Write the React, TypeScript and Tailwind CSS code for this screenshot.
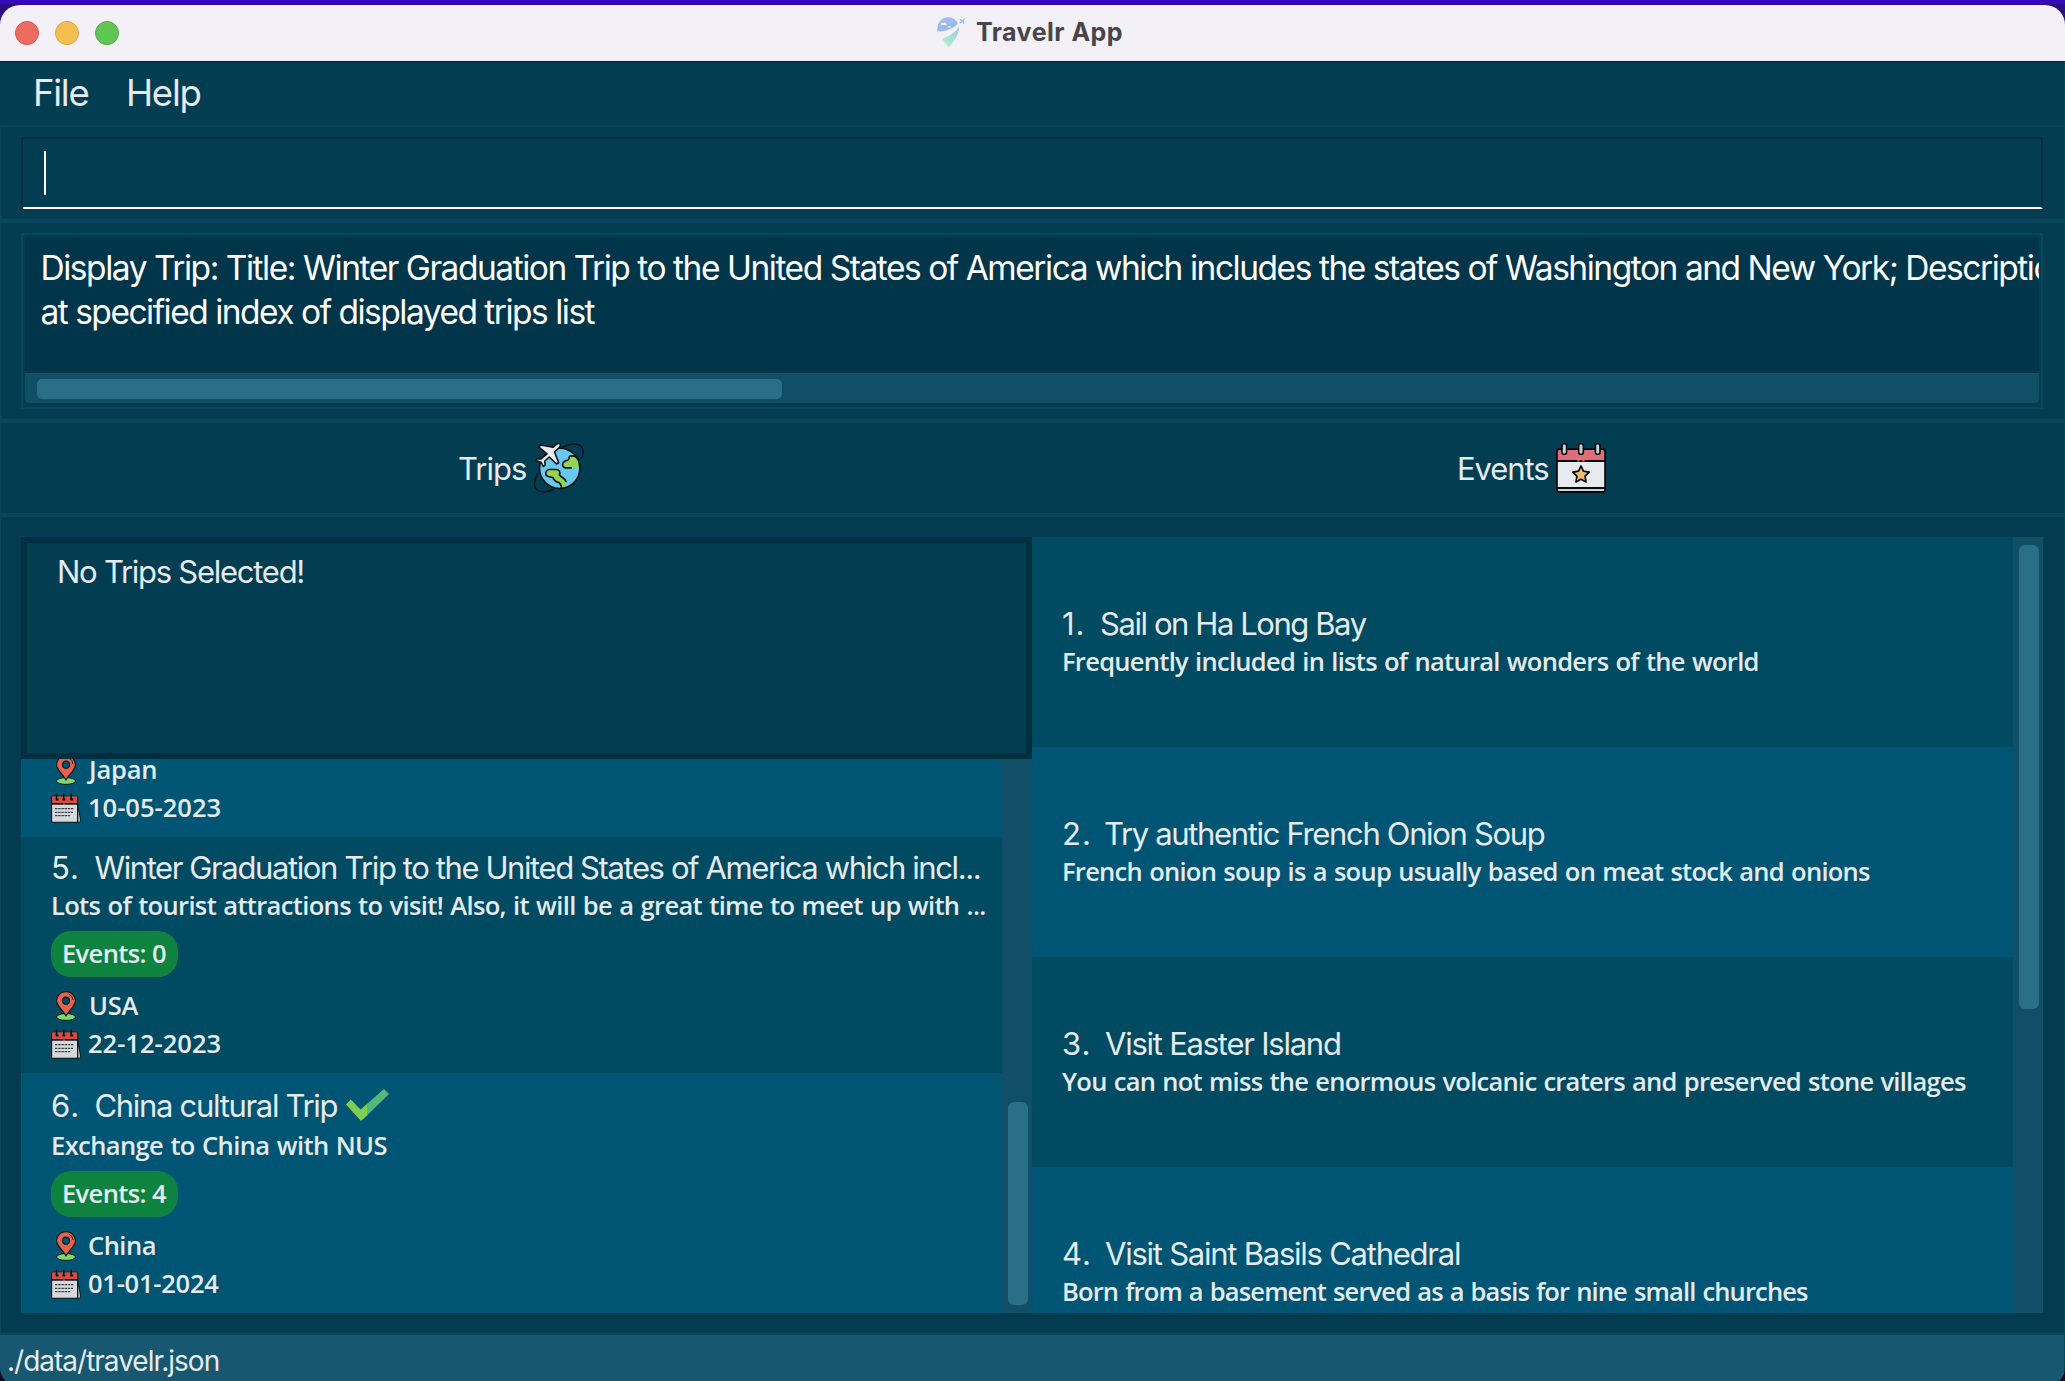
import type { ReactNode } from 'react';

type Trip = {
  index: string;
  title: string;
  titleClass: string;
  description: string;
  descriptionClass: string;
  events: number;
  done?: boolean;
  location: string;
  locationClass: string;
  date: string;
  dateClass: string;
};

type TravelEvent = {
  index: string;
  indexClass: string;
  title: string;
  titleClass: string;
  description: string;
  descriptionClass: string;
};

const trips: Trip[] = [
  {
    index: '5.',
    title: 'Winter Graduation Trip to the United States of America which incl...',
    titleClass: 'tracking-[-1.4px]',
    description: 'Lots of tourist attractions to visit! Also, it will be a great time to meet up with ...',
    descriptionClass: 'tracking-[-0.65px]',
    events: 0,
    location: 'USA',
    locationClass: 'pl-px tracking-[-0.2px]',
    date: '22-12-2023',
    dateClass: '',
  },
  {
    index: '6.',
    title: 'China cultural Trip',
    titleClass: 'tracking-[-1.31px]',
    description: 'Exchange to China with NUS',
    descriptionClass: 'tracking-[-0.6px]',
    events: 4,
    done: true,
    location: 'China',
    locationClass: 'tracking-[-0.5px]',
    date: '01-01-2024',
    dateClass: 'tracking-[-0.25px]',
  },
];

const events: TravelEvent[] = [
  {
    index: '1.',
    indexClass: 'w-[38px]',
    title: 'Sail on Ha Long Bay',
    titleClass: 'tracking-[-1.42px]',
    description: 'Frequently included in lists of natural wonders of the world',
    descriptionClass: 'tracking-[-0.71px]',
  },
  {
    index: '2.',
    indexClass: 'w-[42px]',
    title: 'Try authentic French Onion Soup',
    titleClass: 'tracking-[-1.34px]',
    description: 'French onion soup is a soup usually based on meat stock and onions',
    descriptionClass: 'tracking-[-0.72px]',
  },
  {
    index: '3.',
    indexClass: 'w-[43px]',
    title: 'Visit Easter Island',
    titleClass: 'tracking-[-1.24px]',
    description: 'You can not miss the enormous volcanic craters and preserved stone villages',
    descriptionClass: 'tracking-[-0.735px]',
  },
  {
    index: '4.',
    indexClass: 'w-[43px]',
    title: 'Visit Saint Basils Cathedral',
    titleClass: 'tracking-[-1.24px]',
    description: 'Born from a basement served as a basis for nine small churches',
    descriptionClass: 'tracking-[-0.85px]',
  },
];

function LogoIcon() {
  return (
    <svg className="h-[30px] w-[29px]" viewBox="0 0 29 30">
      <defs>
        <linearGradient id="cap" x1="0" y1="0" x2="1" y2="1">
          <stop offset="0" stopColor="#a3c4f3" />
          <stop offset="1" stopColor="#8fb4ea" />
        </linearGradient>
        <linearGradient id="tail" x1="0.8" y1="0" x2="0.3" y2="1">
          <stop offset="0" stopColor="#a4cde2" />
          <stop offset="1" stopColor="#b0ead0" />
        </linearGradient>
      </defs>
      <path d="M0.4 14.4C-.6 6 4.6.3 11 .3c4.800 0 8.400 2.600 10 6.300C16.500 12 8 14.800.4 14.400z" fill="url(#cap)" />
      <path d="M22.300 9.200C18 16 11 19.500 5 21.800L11.800 30.200C17 24.500 22 18 22.300 9.200z" fill="url(#tail)" />
      <path d="M4 7.200c0-1.200 1.500-1.800 2.300-1 .8-1.400 3-.9 3 .7.800.1.900 1 .1 1H4.600c-.5 0-.6-.4-.6-.7zM10.500 10c.2-1 1.600-1.400 2.200-.6.800-.4 1.700.4 1.200 1.100h-3.200z" fill="#f3f0f7" />
      <path d="M22 6l2.200-1.800-1.800-1.700.9-.5 2.400.9 1.900-1.700c.6-.4 1.100 0 .7.600l-1.600 2 .7 2.500-.6.700-1.500-2-1.600 1.500z" fill="#9dbdf0" />
    </svg>
  );
}

function GlobeIcon() {
  return (
    <svg className="size-[50px]" viewBox="0 0 50 50" strokeLinejoin="round" strokeLinecap="round">
      <circle cx="25.700" cy="25.300" r="20.200" fill="#67c8f0" />
      <path d="M45.500 17.500C43.500 13.500 40 12.600 36 13c-1.500 1.500-.5 3-2 4-2 .5-4 1.500-5 3.500-.5 2 .5 4 2.500 4.300h14z" fill="#94d452" />
      <path d="M13 26.500h9.500c3 .5 4 2.500 3 5.500 1.500 2.500 6 3 6.500 6.500.2 3-1 4.500-1.500 7.200l-3 .3c.5-3.500-1-5-2.500-6.500-3.500-.5-5-2-6-5-2.500-.5-6-.5-6.700-3-.3-2 .7-3 .7-5z" fill="#94d452" />
      <g fill="none" stroke="#061319" strokeWidth="1.700">
        <circle cx="25.700" cy="25.300" r="20.200" />
        <path d="M45 17c-1.500-3.500-5-4.300-9-4-1.500 1.500-.5 3-2 4-2 .5-4.500 1.500-5.300 3.500-.5 2 .5 4 2.500 4.300h6" />
        <path d="M27.500 46c.3-3.500-1-5-2.500-6.500-3.500-.5-5-2-6-5-2.500-.5-6.500-.5-7.200-3-.3-2.500 1.200-4.700 3.200-5h7.500c3 .5 4 2.500 3 5.500 1.500 2.500 6 3 6.500 6.500" />
        <path d="M29.500 4c7-4 15-4.500 18.500.5 2 3.500 1.400 7-.5 11" strokeWidth="1.500" />
        <path d="M3.500 31C.5 36-.5 41.500 1.500 45c3 5 10.500 5 18.500 1" strokeWidth="1.500" />
      </g>
      <path
        d="M13 10.800 5 4l1.500-2 12.500 2.300L23 1c1-.6 3-.6 3.300.2.200 1-.2 2.300-1 3.300L20.500 9l4.200 10.500-2.200 1.500-7.300-7-4.400 4 .3 4-1.700 1.500-2.200-4.200L1.500 17.500 3 15.800l4 .2z"
        fill="#e9edf0"
        stroke="#061319"
        strokeWidth="1.600"
      />
    </svg>
  );
}

function EventCalendarIcon() {
  return (
    <svg className="size-[50px]" viewBox="0 0 50 50" strokeLinejoin="round">
      <rect x="0.900" y="6.200" width="48.200" height="42.800" rx="2.500" fill="#e7ebef" />
      <path d="M.9 18V8.700A2.500 2.500 0 0 1 3.400 6.200h43.200a2.500 2.500 0 0 1 2.500 2.500V18z" fill="#df6d7b" />
      <path d="M.9 45h48.200v1.500A2.500 2.500 0 0 1 46.600 49H3.400a2.500 2.500 0 0 1-2.500-2.500z" fill="#c6d5d9" />
      <path d="M.9 18h48.200M.9 45h48.200" stroke="#05090c" strokeWidth="1.800" />
      <path d="M21.500 17.800h2M26.500 17.800h2" stroke="#ef6f83" strokeWidth="1.500" />
      <rect x="0.900" y="6.200" width="48.200" height="42.800" rx="2.500" fill="none" stroke="#05090c" strokeWidth="1.800" />
      <g fill="#c9d3d9" stroke="#05090c" strokeWidth="1.600">
        <rect x="6" y="0.800" width="4.600" height="10.400" rx="2" />
        <rect x="22.700" y="0.800" width="4.600" height="10.400" rx="2" />
        <rect x="39.400" y="0.800" width="4.600" height="10.400" rx="2" />
      </g>
      <path
        d="M25 23l2.500 5.200 5.700.9-4.100 4.100.9 5.800-5-2.700-5 2.700.9-5.800-4.100-4.100 5.700-.9z"
        fill="#efba72"
        stroke="#05090c"
        strokeWidth="1.700"
      />
    </svg>
  );
}

function PinIcon() {
  return (
    <svg className="size-[30px]" viewBox="0 0 30 30" strokeLinejoin="round">
      <ellipse cx="15" cy="26" rx="9.500" ry="3.400" fill="#7fd772" stroke="#07151b" strokeWidth="1" />
      <path
        fillRule="evenodd"
        d="M15 25c-1.500-3-4-5.500-6.500-8.700C6.500 13.800 5.500 12 5.500 9.600A9.400 9.400 0 0 1 15 .6a9.400 9.400 0 0 1 9.500 9c0 2.400-1 4.200-3 6.700C19 19.500 16.500 22 15 25zM15 6.100a3.600 3.600 0 1 0 0 7.200 3.600 3.600 0 0 0 0-7.200z"
        fill="#e8614a"
        stroke="#07151b"
        strokeWidth="1.100"
      />
      <path d="M18 3.300c2.300.9 3.700 2.900 3.900 5.700" fill="none" stroke="#07151b" strokeWidth="0.900" />
    </svg>
  );
}

function DateIcon() {
  return (
    <svg className="size-[30px]" viewBox="0 0 30 30">
      <path d="M26.500 11.500l3.200 15.500c.1 1.200-.5 2.200-1.700 2.200h-4z" fill="#aab4b9" stroke="#07100f" strokeWidth="0.900" />
      <rect x="0.600" y="3.200" width="26" height="26" rx="1" fill="#d3d9dd" stroke="#07100f" strokeWidth="1.100" />
      <rect x="1" y="3.500" width="25.200" height="7" fill="#dc4a40" />
      <path d="M.3 10.900h26.500" stroke="#07100f" strokeWidth="1.600" />
      <path d="M12 11h2" stroke="#f06055" strokeWidth="1.200" />
      <path d="M5.500.5v6.500M12.800.5v6.500M20.200.5v6.500" stroke="#07100f" strokeWidth="1.500" />
      <path d="M4.800 6.500h2.800M11.300 6.500h3M19.500 6.500h2.800" stroke="#07100f" strokeWidth="1.800" />
      <path d="M4 15.700h19M4 19.300h18M4 22.700h15" stroke="#10181b" strokeWidth="1" strokeDasharray="2.400 0.800" />
    </svg>
  );
}

function CheckIcon() {
  return (
    <svg className="h-[32px] w-[43px]" viewBox="0 0 43 32">
      <path d="M21.300 14.700 38 0l5 5-21.700 21.300z" fill="#53b878" />
      <path d="M0 15.500l4.800-5 9.700 10 7-5.900V26.300L15 32z" fill="#80ce4f" />
    </svg>
  );
}

function Title({ className, children }: { className: string; children: ReactNode }) {
  return <span className={`text-[31px] whitespace-nowrap ${className}`}>{children}</span>;
}

function Description({ className, children }: { className: string; children: ReactNode }) {
  return (
    <div
      className={`h-9 font-['Open_Sans',sans-serif] text-[25.5px] leading-9 font-semibold whitespace-nowrap [word-spacing:1.2px] ${className}`}
    >
      {children}
    </div>
  );
}

type TripDetailsProps = { location: string; locationClass: string; date: string; dateClass: string };

function TripDetails({ location, locationClass, date, dateClass }: TripDetailsProps) {
  return (
    <div className="font-['Open_Sans',sans-serif] text-[25.5px] font-semibold">
      <div className="flex h-10 items-center gap-[7px]">
        <span className="pt-0.5">
          <PinIcon />
        </span>
        <span className={`leading-10 ${locationClass}`}>{location}</span>
      </div>
      <div className="flex h-9 items-center gap-[7px]">
        <span className="pt-0.5">
          <DateIcon />
        </span>
        <span className={`leading-9 ${dateClass}`}>{date}</span>
      </div>
    </div>
  );
}

function TripCell({ trip, className }: { trip: Trip; className: string }) {
  return (
    <div className={`shrink-0 pt-2.5 pb-3 pl-[30px] ${className}`}>
      <div className={`flex items-center ${trip.done ? 'h-11 leading-[46px]' : 'h-10 leading-[42px]'}`}>
        <span className="w-[43.5px] pt-0.5 text-[31px] tracking-[1px]">{trip.index}</span>
        <Title className={`pt-0.5 ${trip.titleClass}`}>{trip.title}</Title>
        {trip.done && (
          <span className="ml-[9px]">
            <CheckIcon />
          </span>
        )}
      </div>
      <Description className={trip.descriptionClass}>{trip.description}</Description>
      <div className="mt-2 mb-2 flex h-[46px] w-[127px] items-center justify-center rounded-[20px] bg-[#0e8340] pr-px pb-[2px] font-['Open_Sans',sans-serif] text-[25.5px] leading-[44px] font-semibold tracking-[-0.6px]">
        Events: {trip.events}
      </div>
      <TripDetails
        location={trip.location}
        locationClass={trip.locationClass}
        date={trip.date}
        dateClass={trip.dateClass}
      />
    </div>
  );
}

function EventCell({ event, className }: { event: TravelEvent; className: string }) {
  return (
    <div className={`h-[210px] shrink-0 pt-[66px] pl-[30px] ${className}`}>
      <div className="flex h-10 items-center pt-0.5 leading-10">
        <span className={`text-[31px] tracking-[1px] ${event.indexClass}`}>{event.index}</span>
        <Title className={event.titleClass}>{event.title}</Title>
      </div>
      <Description className={event.descriptionClass}>{event.description}</Description>
    </div>
  );
}

export default function App() {
  return (
    <div className="h-[1381px] w-[2065px] overflow-hidden bg-[linear-gradient(180deg,#3609b6_0px,#3609b6_3px,#2a0d7e_5px,#3a1088_24px,#16052f_60px)] pt-[5px] font-['Inter',sans-serif] text-[#e5ebef]">
      <div className="flex h-[1382px] w-full flex-col overflow-hidden rounded-[20px] bg-[#033d52]">
        <header className="flex h-[56px] shrink-0 items-center bg-[#f3f0f7] pl-[15px]">
          <div className="flex w-[104px] items-center gap-4">
            <span className="size-6 rounded-full border border-[#d9564a] bg-[#ed6b60]" />
            <span className="size-6 rounded-full border border-[#dba63f] bg-[#f5bf4f]" />
            <span className="size-6 rounded-full border border-[#51ad43] bg-[#61c554]" />
          </div>
          <div className="flex flex-1 items-center justify-center gap-[10px] pr-[124px] pb-[3px]">
            <LogoIcon />
            <h1 className="pt-0.5 text-[25px] font-bold tracking-[0.5px] text-[#464547]">Travelr App</h1>
          </div>
        </header>

        <div className="flex flex-1 flex-col border-t border-r border-t-[#012133] border-r-[#07465b]">
          <nav className="flex h-[63px] shrink-0 items-center pl-[33px] text-[36.5px] tracking-[-1.26px]">
            <span className="w-[93px]">File</span>
            <span>Help</span>
          </nav>

          <section className="h-[96px] shrink-0 border-y-2 border-l border-[#07465b] pt-[10px] pr-[21px] pl-[20px]">
            <div className="border-l-2 border-[#002f40]">
              <div className="flex h-[72px] border-y-2 border-r-2 border-b-white border-[#002f40] pt-[12px] pl-[21px]">
                <span className="h-[44px] w-[2px] bg-white" />
              </div>
            </div>
          </section>

          <section className="h-[200px] shrink-0 border-y-2 border-l border-[#07465b] pt-[10px] pr-[21px] pl-[20px]">
            <div className="h-[176px] border-2 border-[#07465b] p-[2px]">
              <div className="h-[136px] overflow-hidden bg-[#01354a] pt-[9px] pl-[15.5px] text-[33.5px] leading-[44px] whitespace-nowrap text-white">
                <p className="tracking-[-1.46px]">
                  Display Trip: Title: Winter Graduation Trip to the United States of America which includes the states of
                  Washington and New York; Description
                </p>
                <p className="tracking-[-1.5px]">at specified index of displayed trips list</p>
              </div>
              <div className="flex h-[30px] items-center rounded-b-[4px] bg-[#114f67] pt-[2px] pl-3">
                <div className="h-5 w-[745px] rounded-[5px] bg-[#2b6e87]" />
              </div>
            </div>
          </section>

          <section className="grid h-[94px] shrink-0 grid-cols-2 border-y-2 border-l border-[#07465b] pr-[27px] pl-[15px] text-[31px]">
            <div className="flex items-center justify-center gap-[8px]">
              <span className="pt-0.5 tracking-[-1px]">Trips</span>
              <GlobeIcon />
            </div>
            <div className="flex items-center justify-center gap-[8px]">
              <span className="pt-0.5 tracking-[-1.1px]">Events</span>
              <EventCalendarIcon />
            </div>
          </section>

          <main className="h-[820px] shrink-0 border-y-2 border-l border-[#07465b] bg-[#033b50] pt-[20px] pr-[21px] pl-[20px]">
            <div className="flex h-[776px]">
              <div className="flex w-[1011px] flex-col">
                <div className="h-[222px] shrink-0 border-[6px] border-[#002f40] bg-[#033d52] pt-[9px] pl-[30px] leading-10">
                  <Title className="tracking-[-1.26px]">No Trips Selected!</Title>
                </div>
                <div className="flex h-[554px]">
                  <div className="flex w-[981px] flex-col overflow-hidden">
                    <div className="flex h-[78px] shrink-0 flex-col justify-end bg-[#005574] pb-3 pl-[30px]">
                      <TripDetails
                        location="Japan"
                        locationClass="pl-px tracking-[-0.2px]"
                        date="10-05-2023"
                        dateClass=""
                      />
                    </div>
                    <TripCell trip={trips[0]} className="h-[236px] bg-[#004a62]" />
                    <TripCell trip={trips[1]} className="h-[240px] bg-[#005574]" />
                  </div>
                  <div className="flex w-[30px] items-end bg-[#114f67] pb-2 pl-[6px]">
                    <div className="h-[203px] w-5 rounded-[6px] bg-[#2b6e87]" />
                  </div>
                </div>
              </div>
              <div className="flex flex-1">
                <div className="flex flex-1 flex-col overflow-hidden">
                  {events.map((event, i) => (
                    <EventCell key={event.index} event={event} className={i % 2 ? 'bg-[#005574]' : 'bg-[#004a62]'} />
                  ))}
                </div>
                <div className="w-[30px] bg-[#114f67] pt-2 pl-[6px]">
                  <div className="h-[464px] w-5 rounded-[6px] bg-[#2b6e87]" />
                </div>
              </div>
            </div>
          </main>

          <footer className="flex-1 bg-[#17576f] pt-[6px] pl-[7px] text-[28px] leading-10 tracking-[-1px]">
            ./data/travelr.json
          </footer>
        </div>
      </div>
    </div>
  );
}
